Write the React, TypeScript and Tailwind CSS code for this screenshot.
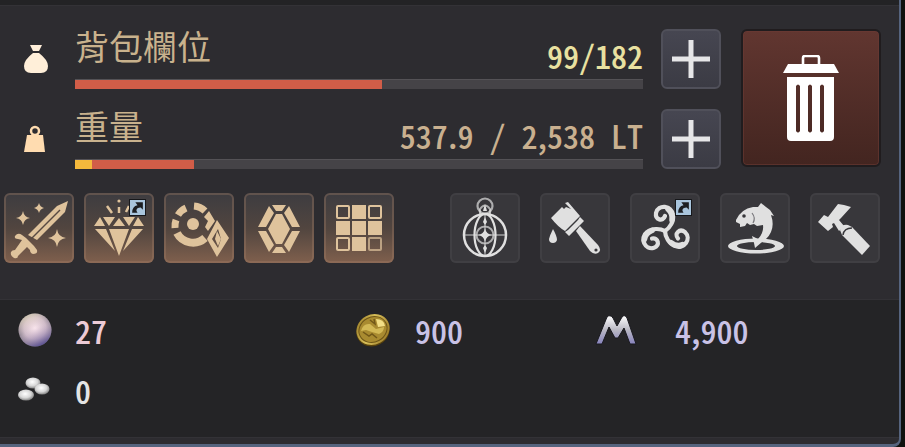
import { useState } from "react";
import type { ReactNode } from "react";
import clsx from "clsx";

type Segment = { color: string; percent: number };

const SwordIcon = () => (
  <svg viewBox="0 0 70 70" className="size-full" fill="currentColor">
    <path d="M64 8 61 19 33 47 24 42 53 13Z" />
    <path d="M56 17 27 46" stroke="#584a42" strokeWidth="1.5" />
    <path d="M11 43q3-4 7-1l4 3 8 8 3 4q1 4-4 4-3-1-3-4l-3-3-9 9q0 3-4 2-4-2-3-6 1-2 4-2l7-10-4-1q-4 0-3-3Z" />
    <path d="M19 18q1 6 7 7-6 1-7 7-1-6-7-7 6-1 7-7ZM35 10q1 4 5 5-4 1-5 5-1-4-5-5 4-1 5-5ZM53 36q1 8 9 9-8 1-9 9-1-8-9-9 8-1 9-9Z" />
  </svg>
);

const DiamondIcon = () => (
  <svg viewBox="0 0 70 70" className="size-full" fill="currentColor">
    <path d="M16 24 21 33H10ZM19 24H31L25 33ZM35 25 41 33H29ZM39 24H51L45 33ZM54 24 60 33H49Z" />
    <path d="M11 36H22L31 58ZM25 36H45L35 63ZM48 36H59L39 58Z" />
    <path d="M23 13 28 20M35 14V20M45 13 42 19" stroke="currentColor" strokeWidth="2.5" />
    <circle cx="35" cy="8" r="1.6" />
  </svg>
);

const RelicIcon = () => (
  <svg viewBox="0 0 70 70" className="size-full" fill="currentColor">
    <circle cx="29" cy="31" r="6" />
    <g fill="none" stroke="currentColor" strokeWidth="7">
      <path d="M30 13A18 18 0 0 1 41 18" />
      <path d="M14 22A18 18 0 0 1 22 15" />
      <path d="M11 35A18 18 0 0 1 12 27" />
      <path d="M13 40A18 18 0 0 0 41 45" strokeWidth="8" />
    </g>
    <path d="M45 18 51 28 44 38 41 34 44 28 40 24Z" />
    <path fillRule="evenodd" d="M53 27 65 45 53 64 43 46ZM54 36 48 46 54 55 57 46Z" />
    <path d="M53 38 57 46 54 53 51 46Z" />
  </svg>
);

const GemIcon = () => (
  <svg viewBox="0 0 70 70" className="size-full" fill="currentColor">
    <path d="M32 21H38L46 36 38 51H32L24 36Z" />
    <path d="M28 12H42L38 18H32ZM28 60H42L38 54H32Z" />
    <path d="M25 13 30 20 22 34H14ZM45 13 40 20 48 34H56ZM14 38H22L30 52 25 59ZM56 38H48L40 52 45 59Z" />
  </svg>
);

const GridIcon = () => (
  <svg viewBox="0 0 70 70" className="size-full" fill="currentColor">
    <path d="M28 12H42V26H28ZM12 28H26V42H12ZM28 28H42V42H28ZM44 28H58V42H44ZM28 44H42V58H28Z" />
    <g fill="none" stroke="currentColor" strokeWidth="2">
      <rect x="13" y="13" width="12" height="12" rx="1" />
      <rect x="45" y="13" width="12" height="12" rx="1" />
      <rect x="13" y="45" width="12" height="12" rx="1" />
      <rect x="45" y="45" width="12" height="12" rx="1" opacity=".7" />
    </g>
  </svg>
);

const LanternIcon = () => (
  <svg viewBox="0 0 70 70" className="size-full" fill="none" stroke="currentColor">
    <circle cx="35" cy="42" r="21" strokeWidth="2.5" />
    <ellipse cx="35" cy="42" rx="10.5" ry="21" strokeWidth="2.2" />
    <circle cx="35" cy="42" r="8.5" strokeWidth="2" opacity=".7" />
    <path d="M14 42H56M35 22V62" strokeWidth="1.5" opacity=".6" />
    <circle cx="35" cy="13" r="7.5" strokeWidth="2.2" opacity=".7" />
    <path d="M30 21V16Q35 9 40 16V21" strokeWidth="2" opacity=".7" />
    <path d="M35 35Q36 41 42 42 36 43 35 49 34 43 28 42 34 41 35 35ZM35 24 37 29 35 32 33 29ZM35 52 37 55 35 60 33 55ZM35 11 37 18H33Z" fill="currentColor" stroke="none" />
  </svg>
);

const BrushIcon = () => (
  <svg viewBox="0 0 70 70" className="size-full" fill="currentColor">
    <path d="M11 25 22 14 24 16 26 14 31 16 25 10 28 9 40 23 25 38Q18 34 11 25Z" />
    <path d="M40 24 44 28 29 43 25 39 28 37 38 27Z" />
    <path d="M40 33 58 52Q62 57 58 60 54 62 50 58L36 38Z" />
    <circle cx="56" cy="57" r="1.6" fill="#38373b" />
    <path d="M13 36Q17 43 17 47 16 50 13 50 9 50 9 46 10 42 13 36Z" />
  </svg>
);

const SpiralIcon = () => (
  <svg viewBox="0 0 70 70" className="size-full" fill="none" stroke="currentColor" strokeLinecap="round">
    {[0, 120, 240].map((angle) => (
      <g key={angle} transform={`rotate(${angle} 35 38)`}>
        <path d="M35 38C40 35 44 28 43 22 42 12 28 11 26 20 25 27 33 29 35 23" strokeWidth="4.2" />
        <path d="M42 27Q43 20 38 16" strokeWidth="5.5" />
      </g>
    ))}
  </svg>
);

const FishIcon = () => (
  <svg viewBox="0 0 70 70" className="size-full" fill="currentColor">
    <path fillRule="evenodd" d="M8 53a28 7.5 0 1 0 56 0a28 7.5 0 1 0-56 0ZM17 53a19 4 0 1 1 38 0a19 4 0 1 1-38 0Z" />
    <path d="M16 27Q21 16 33 14L38 14 41 10 46 14 50 17 54 23 51 22Q56 36 46 46L42 49 35 55 34 50 32 43 38 46Q44 40 43 32L37 33 34 31 30 32 27 30 25 33 20 34 20 31 16 29Z" />
    <circle cx="24" cy="23" r="1.8" fill="#38373b" />
    <path d="M32 20Q36 25 33 30" fill="none" stroke="#77767a" strokeWidth="1.2" />
  </svg>
);

const HammerIcon = () => (
  <svg viewBox="0 0 70 70" className="size-full" fill="currentColor">
    <path d="M8 29 14 22 18 24 28 11 34 12 41 14 31 25 29 27 34 33 29 38 24 30 22 31 23 34 18 38Z" />
    <path d="M30 37Q31 31 38 32L42 34 60 53 52 62 32 42Z" />
    <path d="M33 42Q34 35 42 35" fill="none" stroke="#38373b" strokeWidth="1.5" />
  </svg>
);

const ShortcutBadge = () => (
  <span className="absolute top-1.5 right-2 size-[17px] border border-[#17181b] bg-[#a9c5dd]">
    <svg viewBox="0 0 14 14" className="size-full" fill="#1c1e22">
      <path d="M5 2H12V9L10 7Q6 7 6 10L7 12H2Q2 6 7 5Z" />
    </svg>
  </span>
);

const PouchIcon = () => (
  <svg viewBox="0 0 24 28" className="h-7 w-6" fill="#ffefd9">
    <path d="M6 0H18L15 6H9ZM9 8H15Q24 15 24 21 24 28 17 28H7Q0 28 0 21 0 15 9 8Z" />
  </svg>
);

const WeightIcon = () => (
  <svg viewBox="0 0 24 28" className="h-7 w-6" fill="#ffdcb0">
    <path d="M3 10H19L21 27H0Z" />
    <circle cx="11" cy="6" r="4" fill="none" stroke="#ffdcb0" strokeWidth="2.5" />
  </svg>
);

const TrashIcon = () => (
  <svg viewBox="0 0 56 86" className="h-[86px] w-14" fill="#fff">
    <path d="M20 9V3Q20 1 22 1H34Q36 1 36 3V9" fill="none" stroke="#fff" strokeWidth="2.6" />
    <path d="M5 9H51L56 18H0Z" />
    <path fillRule="evenodd" d="M4 22H51V82Q51 86 47 86H8Q4 86 4 82ZM13 31V76Q15 79 17 76V31Q15 28 13 31ZM25 31V76Q27 79 29 76V31Q27 28 25 31ZM37 31V76Q39 79 41 76V31Q39 28 37 31Z" />
  </svg>
);

const PearlIcon = () => (
  <svg viewBox="0 0 36 36" className="size-9">
    <defs>
      <radialGradient id="pearl" cx=".5" cy=".45" r=".55">
        <stop offset="0" stopColor="#fbeaf0" />
        <stop offset=".6" stopColor="#c8b8c4" />
        <stop offset="1" stopColor="#6b6775" />
      </radialGradient>
      <linearGradient id="pearlTint" x1=".1" y1="0" x2=".6" y2="1">
        <stop offset="0" stopColor="#f6f3bb" stopOpacity=".7" />
        <stop offset=".5" stopColor="#f0cfdc" stopOpacity=".2" />
        <stop offset="1" stopColor="#5d5296" stopOpacity=".9" />
      </linearGradient>
    </defs>
    <circle cx="19" cy="18" r="16.5" fill="url(#pearl)" />
    <circle cx="19" cy="18" r="16.5" fill="url(#pearlTint)" />
  </svg>
);

const CoinIcon = () => (
  <svg viewBox="0 0 36 36" className="size-9">
    <defs>
      <linearGradient id="gold" x1="0" y1="0" x2="1" y2="1">
        <stop offset="0" stopColor="#8d701d" />
        <stop offset=".45" stopColor="#d9c05a" />
        <stop offset="1" stopColor="#8a6819" />
      </linearGradient>
    </defs>
    <ellipse cx="17" cy="19" rx="17" ry="15" transform="rotate(-28 17 19)" fill="#59430d" />
    <ellipse cx="17" cy="17.5" rx="17" ry="15" transform="rotate(-28 17 17.5)" fill="url(#gold)" />
    <ellipse cx="17" cy="17.5" rx="14.5" ry="12.5" transform="rotate(-28 17 17.5)" fill="#a98b30" stroke="#6d5517" strokeWidth="1" />
    <path d="M5 19Q7 11 14 12L20 17 28 15Q28 20 23 22L16 20 10 18Z" fill="#d3b955" />
    <path d="M14 8 19 12 18 7M7 20 13 24 16 22 21 26" fill="none" stroke="#725818" strokeWidth="1.5" />
    <path d="M20 7Q28 7 29 14L22 15Z" fill="#f3df86" />
  </svg>
);

const MileageIcon = () => (
  <svg viewBox="0 0 42 32" className="h-8 w-[42px]">
    <defs>
      <linearGradient id="mileage" x1="0" y1="0" x2="0" y2="1">
        <stop offset="0" stopColor="#fff" />
        <stop offset=".5" stopColor="#b9b8c3" />
        <stop offset="1" stopColor="#8783bd" />
      </linearGradient>
    </defs>
    <path d="M1 30 12 3Q15 0 18 4L22 12 27 3Q30 0 32 4L41 30H35L29 14 23 24H20L14 13 7 30Z" fill="url(#mileage)" stroke="#19191f" strokeWidth="1" />
  </svg>
);

const SilverIcon = () => (
  <svg viewBox="0 0 34 26" className="h-[26px] w-[34px]">
    <defs>
      <radialGradient id="silver" cx=".45" cy=".4" r=".6">
        <stop offset="0" stopColor="#fff" />
        <stop offset=".6" stopColor="#d7d7d7" />
        <stop offset="1" stopColor="#858585" />
      </radialGradient>
    </defs>
    <ellipse cx="17" cy="6" rx="7.5" ry="5.5" fill="url(#silver)" />
    <ellipse cx="26" cy="12" rx="7.5" ry="5.5" fill="url(#silver)" />
    <ellipse cx="10" cy="18" rx="8" ry="5.5" fill="url(#silver)" />
  </svg>
);

const filters = [
  { label: "Equipment", icon: <SwordIcon /> },
  { label: "Gems", icon: <DiamondIcon />, shortcut: true },
  { label: "Relics", icon: <RelicIcon /> },
  { label: "Crystals", icon: <GemIcon /> },
  { label: "Sort", icon: <GridIcon /> },
];

const tools = [
  { label: "Lantern", icon: <LanternIcon /> },
  { label: "Dye", icon: <BrushIcon /> },
  { label: "Spirit", icon: <SpiralIcon />, shortcut: true },
  { label: "Fishing", icon: <FishIcon /> },
  { label: "Repair", icon: <HammerIcon /> },
];

// digits use the font's own half-width forms, commas and points stay proportional
const Amount = ({ children, className }: { children: string; className: string }) => (
  <span className={clsx("text-[32px] leading-10 font-medium [font-feature-settings:'hwid']", className)}>
    {children.split(/([.,])/).map((part, i) =>
      part === "." || part === "," ? (
        <span key={i} className="[font-feature-settings:normal]">{part}</span>
      ) : (
        part
      )
    )}
  </span>
);

const Meter = ({
  icon,
  label,
  value,
  valueColor,
  segments,
}: {
  icon: ReactNode;
  label: string;
  value: string;
  valueColor: string;
  segments: Segment[];
}) => (
  <div className="flex h-[60px]">
    <div className="flex w-[75px] shrink-0 items-end justify-center pr-1 pb-4">{icon}</div>
    <div className="flex min-w-0 flex-1 flex-col justify-between">
      <div className="flex h-12 items-start justify-between whitespace-nowrap">
        <span className="text-[34px] leading-[34px] text-[#c9b28d]">{label}</span>
        <Amount className={clsx("pt-1.5", valueColor)}>{value}</Amount>
      </div>
      <div className="flex h-2.5 border-t border-[#545256] bg-[#454347]">
        {segments.map((s) => (
          <div key={s.color} className={s.color} style={{ width: `${s.percent}%` }} />
        ))}
      </div>
    </div>
    <button
      aria-label={`${label} +`}
      className="ml-[18px] flex size-[60px] shrink-0 items-center justify-center rounded-md border-2 border-[#50505a] bg-linear-to-b from-[#464651] to-[#3b3b44]"
    >
      <svg viewBox="0 0 38 38" className="size-[38px]">
        <path d="M19 0V38M0 19H38" stroke="#e6e6e8" strokeWidth="5" />
      </svg>
    </button>
  </div>
);

const Currency = ({ icon, amount, color, wide }: { icon: ReactNode; amount: string; color: string; wide?: boolean }) => (
  <div className="flex h-[60px] items-center">
    <div className={clsx("flex shrink-0", wide ? "w-[95px] pl-[15px]" : "w-[75px] pl-4")}>{icon}</div>
    <Amount className={color}>{amount}</Amount>
  </div>
);

export default function App() {
  const [active, setActive] = useState(filters.map((f) => f.label));

  const toggle = (label: string) =>
    setActive((list) => (list.includes(label) ? list.filter((l) => l !== label) : [...list, label]));

  return (
    <div className="min-h-screen bg-[#10120f] pr-1 font-['Noto_Sans_CJK_TC',sans-serif]">
      <main className="flex min-h-screen flex-col rounded-br-lg border-r-2 border-b-[3px] border-[#56647e] bg-[#2d2c30]">
        <div className="h-1.5 border-b border-[#333236] bg-[#232325]" />

        <section className="flex gap-5 pt-[23px] pr-[18px]">
          <div className="flex min-w-0 flex-1 flex-col gap-5">
            <Meter
              icon={<PouchIcon />}
              label="背包欄位"
              value="99/182"
              valueColor="text-[#e9e1a0]"
              segments={[{ color: "bg-[#d15d48]", percent: 54 }]}
            />
            <Meter
              icon={<WeightIcon />}
              label="重量"
              value="537.9 / 2,538 LT"
              valueColor="text-[#c9b08f]"
              segments={[
                { color: "bg-[#f4b93c]", percent: 3 },
                { color: "bg-[#d15d48]", percent: 18 },
              ]}
            />
          </div>
          <button
            aria-label="Trash"
            className="flex h-[138px] w-[140px] shrink-0 items-center justify-center rounded-md border-2 border-[#201c1e] bg-linear-to-b from-[#613630] to-[#432520] bg-clip-padding inset-ring inset-ring-[#6b3a34]/60"
          >
            <TrashIcon />
          </button>
        </section>

        <section className="flex justify-between pt-6 pr-[19px] pb-9 pl-1">
          <div className="flex gap-2.5">
            {filters.map((f) => (
              <button
                key={f.label}
                aria-label={f.label}
                aria-pressed={active.includes(f.label)}
                onClick={() => toggle(f.label)}
                className={clsx(
                  "relative size-[70px] rounded-md text-[#dfc39c]",
                  active.includes(f.label)
                    ? "bg-linear-to-b from-[#3d3c40] via-[#51453f] to-[#80604d] inset-ring-2 inset-ring-[#a47d66]/35"
                    : "bg-[#38373b]"
                )}
              >
                {f.icon}
                {f.shortcut && <ShortcutBadge />}
              </button>
            ))}
          </div>
          <div className="flex gap-5">
            {tools.map((t) => (
              <button
                key={t.label}
                aria-label={t.label}
                className="relative size-[70px] rounded-md bg-[#38373b] text-[#e0e0e0] inset-ring-2 inset-ring-[#403f43]"
              >
                {t.icon}
                {t.shortcut && <ShortcutBadge />}
              </button>
            ))}
          </div>
        </section>

        <section className="grid flex-1 grid-cols-[340fr_240fr_319fr] content-start border-y border-[#333236] bg-[#242426]">
          <Currency icon={<PearlIcon />} amount="27" color="text-[#eccbd6]" />
          <Currency icon={<CoinIcon />} amount="900" color="text-[#c9c2e6]" />
          <Currency icon={<MileageIcon />} amount="4,900" color="text-[#c9c2e6]" wide />
          <Currency icon={<SilverIcon />} amount="0" color="text-[#e4e4e4]" />
        </section>
        <div className="h-1.5" />
      </main>
    </div>
  );
}
